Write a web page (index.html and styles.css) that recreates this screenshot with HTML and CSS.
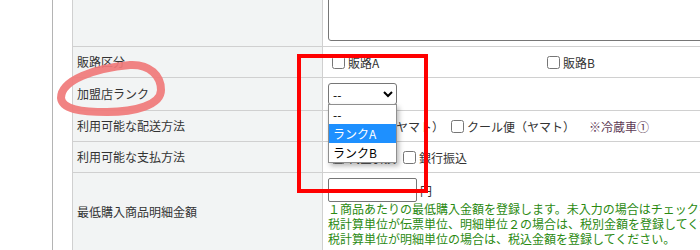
FILE: index.html
```html
<!DOCTYPE html>
<html lang="ja">
<head>
<meta charset="utf-8">
<title>加盟店設定</title>
<link rel="stylesheet" href="styles.css">
</head>
<body>
<div class="page">
  <div class="frame">
    <div class="form">
      <div class="row row-top">
        <div class="label"></div>
        <div class="value value-top"><textarea class="memo"></textarea></div>
      </div>
      <div class="row row-1">
        <div class="label">販路区分</div>
        <div class="value">
          <div class="channels">
            <label class="cb"><input type="checkbox">販路A</label>
            <label class="cb"><input type="checkbox">販路B</label>
          </div>
        </div>
      </div>
      <div class="row row-2">
        <div class="label">加盟店ランク</div>
        <div class="value">
          <div class="select-wrap">
            <select class="rank"><option>--</option><option>ランクA</option><option>ランクB</option></select>
            <div class="popup">
              <div class="opt">--</div>
              <div class="opt on">ランクA</div>
              <div class="opt">ランクB</div>
            </div>
          </div>
        </div>
      </div>
      <div class="row row-3">
        <div class="label">利用可能な配送方法</div>
        <div class="value">
          <label class="cb"><input type="checkbox">宅急便（ヤマト）</label>
          <label class="cb"><input type="checkbox">クール便（ヤマト）</label>
          <span class="note">※冷蔵車①</span>
        </div>
      </div>
      <div class="row row-4">
        <div class="label">利用可能な支払方法</div>
        <div class="value">
          <label class="cb"><input type="checkbox">代金引換</label>
          <label class="cb"><input type="checkbox">銀行振込</label>
        </div>
      </div>
      <div class="row row-5">
        <div class="label">最低購入商品明細金額</div>
        <div class="value value-col">
          <div class="amount"><input type="text" class="amount-input"><span class="unit">円</span></div>
          <div class="help">１商品あたりの最低購入金額を登録します。未入力の場合はチェックを行いません。</div>
          <div class="help">税計算単位が伝票単位、明細単位２の場合は、税別金額を登録してください。</div>
          <div class="help">税計算単位が明細単位の場合は、税込金額を登録してください。</div>
        </div>
      </div>
    </div>
  </div>
  <svg class="ring" width="180" height="130" viewBox="0 0 180 130">
    <path d="M 61 98 C 61 80, 95 68, 130 65 C 150 64, 161 76, 161 90 C 161 105, 135 112, 107 112 C 80 112, 62 109, 61 98 Z" fill="none" stroke="#f07878" stroke-width="8" stroke-opacity="0.92"/>
  </svg>
  <div class="callout"></div>
</div>
</body>
</html>
```
FILE: styles.css
```css
* { box-sizing: border-box; }
html, body { margin: 0; padding: 0; }
body {
  overflow: hidden;
  background: #fff;
  font-family: "Noto Sans CJK JP", "Noto Sans", sans-serif;
  font-size: 12px;
  color: #333;
}
.page { position: relative; height: 250px; overflow: hidden; }
.frame {
  margin-left: 52px;
  height: 100%;
  border-left: 1px solid #b4b4b4;
  padding-left: 19px;
}
.form { width: 700px; border-left: 1px solid #d0d0d0; }
.row { display: flex; border-bottom: 1px solid #d0d0d0; }
.row-top { height: 47px; }
.row-1 { height: 31px; }
.row-2 { height: 33px; }
.row-3 { height: 31px; }
.row-4 { height: 31px; }
.label {
  flex: none;
  width: 250px;
  background: #f2f4f4;
  border-right: 1px solid #d0d0d0;
  padding-left: 4px;
  padding-bottom: 2px;
  display: flex;
  align-items: center;
  white-space: nowrap;
}
.value {
  flex: 1;
  min-width: 0;
  padding: 0 5px;
  display: flex;
  align-items: center;
  white-space: nowrap;
}
.value-top { align-items: flex-end; padding-bottom: 5px; }
.memo {
  display: block;
  flex: none;
  width: 600px;
  height: 81px;
  border: 1px solid #767676;
  border-radius: 3px;
  resize: none;
  margin: 0;
}
.channels { display: grid; grid-template-columns: 215px 215px; }
.cb { display: inline-flex; align-items: center; margin-right: 3px; color: #333; }
.cb input { width: 13px; height: 13px; margin: 3px 3px 3px 4px; }
.note { margin-left: 11px; color: #5e3a55; }
.select-wrap { position: relative; width: 69px; height: 22px; }
.rank {
  width: 69px;
  height: 22px;
  margin: 0;
  font-family: inherit;
  font-size: 12px;
  color: #000;
  border: 1px solid #767676;
  border-radius: 3px;
  background: #fff;
}
.popup {
  position: absolute;
  top: 21px;
  left: 0;
  width: 69px;
  background: #fff;
  border: 1px solid #8f8f8f;
  box-shadow: 2px 3px 5px rgba(0, 0, 0, 0.28);
  z-index: 2;
  color: #000;
}
.opt { height: 19px; line-height: 19px; padding-left: 4px; }
.opt.on { background: #1e90ff; color: #fff; }
.value-col {
  flex-direction: column;
  align-items: flex-start;
  padding-top: 5px;
  padding-bottom: 5px;
}
.amount { display: flex; align-items: center; height: 24px; }
.amount-input {
  width: 89px;
  height: 24px;
  margin: 0 3px 0 0;
  border: 1px solid #767676;
  border-radius: 2px;
}
.unit { color: #333; }
.help { color: #2b8a12; line-height: 15px; white-space: nowrap; margin-top: -1px; }
.help + .help { margin-top: 0; }
.ring { position: absolute; left: 0; top: 0; z-index: 3; }
.callout {
  position: absolute;
  left: 297px;
  top: 54px;
  width: 131px;
  height: 139px;
  border: 4px solid #ff0000;
  z-index: 4;
}
```
